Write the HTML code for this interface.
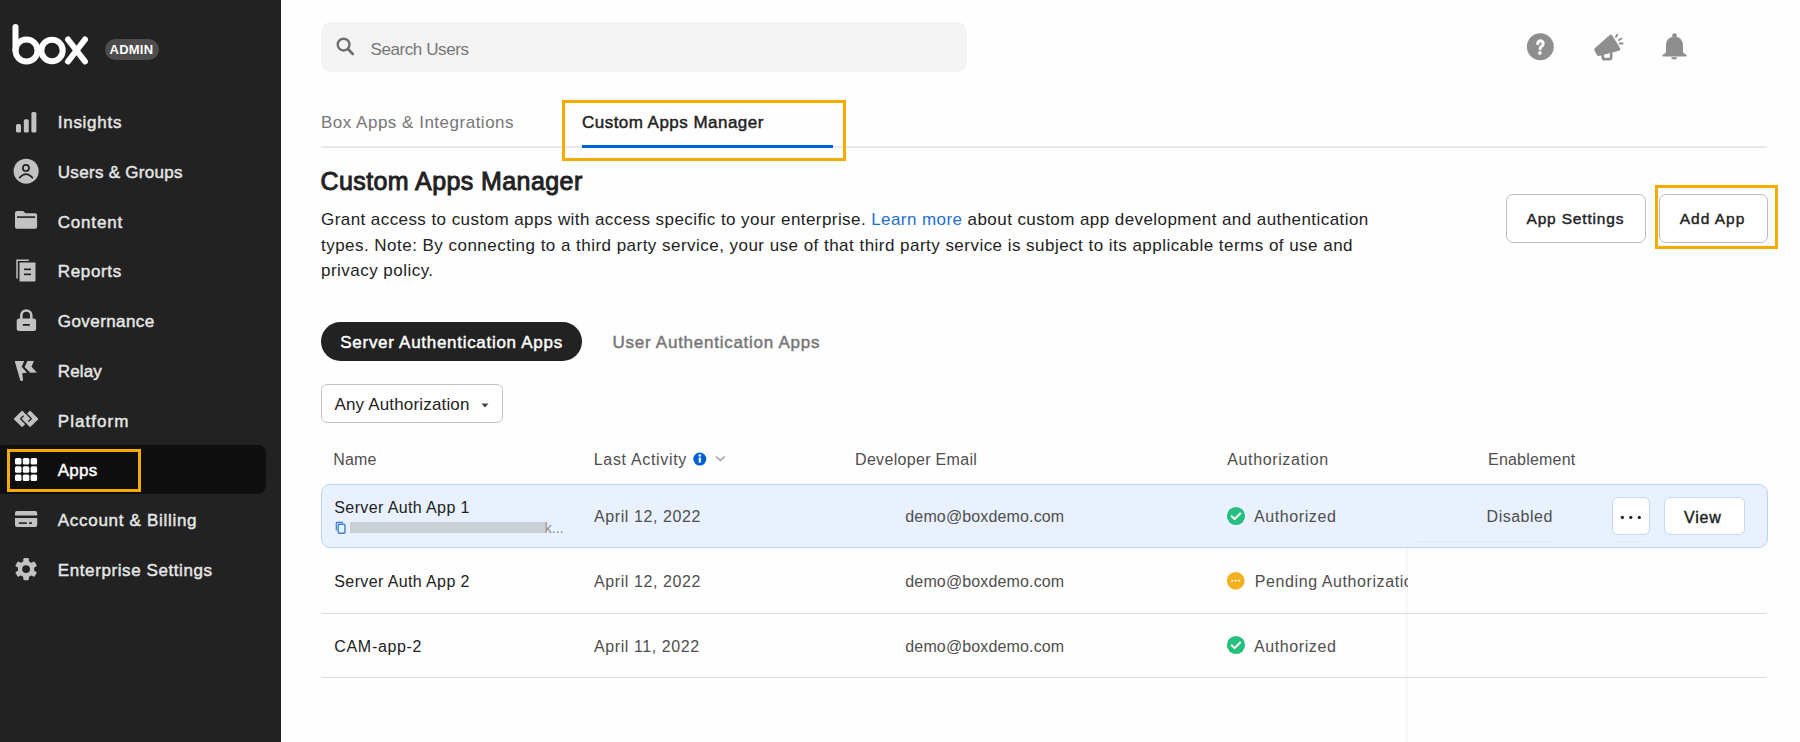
<!DOCTYPE html>
<html><head><meta charset="utf-8"><title>Custom Apps Manager</title>
<style>
html,body{margin:0;padding:0;width:1800px;height:742px;overflow:hidden;background:#fefefe;}
body{position:relative;font-family:"Liberation Sans", sans-serif;}
.t{position:absolute;white-space:nowrap;}
</style></head><body>
<div style="position:absolute;left:0;top:0;width:281px;height:742px;background:#212221"></div>
<svg style="position:absolute;left:0;top:0" width="100" height="80" viewBox="0 0 100 80">
<g fill="none" stroke="#fff" stroke-width="6" stroke-linecap="round">
<line x1="15.5" y1="27" x2="15.5" y2="50"/>
<circle cx="26.5" cy="50.5" r="11"/>
<circle cx="52" cy="50.5" r="10.7"/>
<line x1="68" y1="39.5" x2="85" y2="61.5"/>
<line x1="85" y1="39.5" x2="68" y2="61.5"/>
</g></svg>
<div style="position:absolute;left:104.5px;top:39px;width:54.5px;height:21px;border-radius:10.5px;background:#4d4d4d"></div>
<div class="t" style="left:109.50px;top:41.70px;font-size:13px;line-height:16px;font-weight:700;color:#fff;letter-spacing:0.250px;">ADMIN</div>
<div style="position:absolute;left:-4px;top:445px;width:270px;height:49px;background:#0f0f0f;border-radius:8px"></div>
<div style="position:absolute;left:7px;top:449px;width:128px;height:37px;border:3px solid #f5ab00"></div>
<div class="t" style="left:57.80px;top:112.21px;font-size:17px;line-height:21px;font-weight:400;color:#e6e6e6;letter-spacing:0.715px;-webkit-text-stroke:0.45px #e6e6e6;">Insights</div>
<div class="t" style="left:57.80px;top:161.94px;font-size:17px;line-height:21px;font-weight:400;color:#e6e6e6;letter-spacing:0.297px;-webkit-text-stroke:0.45px #e6e6e6;">Users &amp; Groups</div>
<div class="t" style="left:57.80px;top:211.67px;font-size:17px;line-height:21px;font-weight:400;color:#e6e6e6;letter-spacing:0.797px;-webkit-text-stroke:0.45px #e6e6e6;">Content</div>
<div class="t" style="left:57.80px;top:261.40px;font-size:17px;line-height:21px;font-weight:400;color:#e6e6e6;letter-spacing:0.637px;-webkit-text-stroke:0.45px #e6e6e6;">Reports</div>
<div class="t" style="left:57.80px;top:311.13px;font-size:17px;line-height:21px;font-weight:400;color:#e6e6e6;letter-spacing:0.427px;-webkit-text-stroke:0.45px #e6e6e6;">Governance</div>
<div class="t" style="left:57.80px;top:360.86px;font-size:17px;line-height:21px;font-weight:400;color:#e6e6e6;letter-spacing:0.145px;-webkit-text-stroke:0.45px #e6e6e6;">Relay</div>
<div class="t" style="left:57.80px;top:410.59px;font-size:17px;line-height:21px;font-weight:400;color:#e6e6e6;letter-spacing:1.034px;-webkit-text-stroke:0.45px #e6e6e6;">Platform</div>
<div class="t" style="left:57.80px;top:460.32px;font-size:17px;line-height:21px;font-weight:400;color:#fff;letter-spacing:0.200px;-webkit-text-stroke:0.45px #fff;">Apps</div>
<div class="t" style="left:57.80px;top:510.05px;font-size:17px;line-height:21px;font-weight:400;color:#e6e6e6;letter-spacing:0.697px;-webkit-text-stroke:0.45px #e6e6e6;">Account &amp; Billing</div>
<div class="t" style="left:57.80px;top:559.78px;font-size:17px;line-height:21px;font-weight:400;color:#e6e6e6;letter-spacing:0.591px;-webkit-text-stroke:0.45px #e6e6e6;">Enterprise Settings</div>

<svg style="position:absolute;left:0;top:0" width="281" height="742" viewBox="0 0 281 742">
<g fill="#c2c2c2">
 <!-- insights -->
 <rect x="16" y="124" width="5" height="8.5" rx="1.5"/>
 <rect x="23.8" y="119.3" width="5" height="13.2" rx="1.5"/>
 <rect x="31.4" y="112" width="5" height="20.5" rx="1.5"/>
 <!-- users -->
 <circle cx="26.15" cy="171.2" r="12.5"/>
 <!-- folder -->
 <path d="M15 213 a2 2 0 0 1 2-2 h6 l2.5 2.2 h9.6 a2 2 0 0 1 2 2 v11.5 a2 2 0 0 1-2 2 h-18.1 a2 2 0 0 1-2-2z"/>
 <!-- reports -->
 <path d="M16.3 259.4 h12.5 v1.5 h-11 v17.5 h-1.5z"/>
 <rect x="19.5" y="262.5" width="16" height="19" rx="0.8"/>
 <!-- lock -->
 <path d="M20 319 v-3.5 a6.3 6.3 0 0 1 12.6 0 v3.5 h-2.6 v-3.5 a3.7 3.7 0 0 0 -7.4 0 v3.5z"/>
 <rect x="16.7" y="318.5" width="19.4" height="12.5" rx="2.5"/>
 <!-- relay flag -->
 <path d="M15.1 361.1 L24.2 361.1 L21.7 366.7 L27 372.8 L22.2 373.2 L23 379.4 A1.45 1.45 0 0 1 20.1 379.8 L15 362.3Z"/>
 <path d="M27.4 361.1 L33.9 361.1 L31.5 366.7 L36.9 372.4 L30.2 372.8 L24.6 367.1Z"/>
 <!-- apps grid -->
 <rect x="15" y="458" width="6.5" height="6.5" rx="1.5" fill="#fff"/>
 <rect x="22.8" y="458" width="6.5" height="6.5" rx="1.5" fill="#fff"/>
 <rect x="30.6" y="458" width="6.5" height="6.5" rx="1.5" fill="#fff"/>
 <rect x="15" y="466.2" width="6.5" height="6.5" rx="1.5" fill="#fff"/>
 <rect x="22.8" y="466.2" width="6.5" height="6.5" rx="1.5" fill="#fff"/>
 <rect x="30.6" y="466.2" width="6.5" height="6.5" rx="1.5" fill="#fff"/>
 <rect x="15" y="474.4" width="6.5" height="6.5" rx="1.5" fill="#fff"/>
 <rect x="22.8" y="474.4" width="6.5" height="6.5" rx="1.5" fill="#fff"/>
 <rect x="30.6" y="474.4" width="6.5" height="6.5" rx="1.5" fill="#fff"/>
 <!-- card -->
 <path d="M15 513 a2 2 0 0 1 2-2 h18.2 a2 2 0 0 1 2 2 v2.5 h-22.2z"/>
 <path d="M15 518 h22.2 v7 a2 2 0 0 1-2 2 h-18.2 a2 2 0 0 1-2-2z"/>
</g>
<!-- users inner -->
<g fill="none" stroke="#222" stroke-width="1.7" stroke-linecap="round">
 <circle cx="25.95" cy="167.9" r="3.1"/>
 <path d="M19.6 177.6 Q26 170.5 32.4 177.6"/>
</g>
<!-- folder line -->
<rect x="17" y="216.3" width="18.1" height="1.6" fill="#222"/>
<!-- reports lines -->
<rect x="24" y="268.5" width="7" height="1.7" fill="#222"/>
<rect x="24" y="273.5" width="7" height="1.7" fill="#222"/>
<!-- lock dash -->
<rect x="22.8" y="324" width="7" height="1.8" fill="#222"/>
<!-- platform -->
<g fill="#c2c2c2" stroke="#c2c2c2" stroke-width="1.2" stroke-linejoin="round">
 <path d="M14.5 419 L22.1 411.3 L29.7 418.9 L22.1 426.4Z"/>
 <path d="M22.5 418.9 L30.1 411.3 L37.6 419 L30.1 426.4Z"/>
</g>
<g fill="none" stroke="#222" stroke-width="1.35" stroke-linecap="round" stroke-linejoin="round">
 <path d="M23.2 416.1 L20.6 418.7 L26.3 424.4"/>
 <path d="M25.7 412.9 L31.3 418.7 L28.7 421.3"/>
</g>
<!-- card dashes -->
<rect x="18.8" y="522.3" width="8" height="1.6" fill="#222"/>
<rect x="29" y="522.3" width="3" height="1.6" fill="#222"/>
<!-- gear -->
<g transform="translate(26.1 569.1)">
 <g fill="#c2c2c2">
  <circle r="8.2"/>
  <rect x="-2.8" y="-11.1" width="5.6" height="22.2" rx="1.2"/>
  <rect x="-2.8" y="-11.1" width="5.6" height="22.2" rx="1.2" transform="rotate(60)"/>
  <rect x="-2.8" y="-11.1" width="5.6" height="22.2" rx="1.2" transform="rotate(120)"/>
 </g>
 <circle r="3.9" fill="#222"/>
</g>
</svg>
<div style="position:absolute;left:321px;top:22px;width:646px;height:50px;background:#f3f3f3;border-radius:10px"></div>
<svg style="position:absolute;left:330px;top:30px" width="30" height="30" viewBox="330 30 30 30">
<circle cx="343.6" cy="44.6" r="5.9" fill="none" stroke="#6d6d6d" stroke-width="2.4"/>
<line x1="348" y1="49" x2="352.8" y2="54" stroke="#6d6d6d" stroke-width="2.6" stroke-linecap="round"/>
</svg>
<div class="t" style="left:370.50px;top:38.71px;font-size:17px;line-height:21px;font-weight:400;color:#767676;letter-spacing:-0.409px;">Search Users</div>
<svg style="position:absolute;left:1500px;top:20px" width="200" height="50" viewBox="1500 20 200 50">
<circle cx="1540.3" cy="46.75" r="13.45" fill="#8e8e8e"/>
<path d="M1537.7 43.6 a2.75 2.75 0 1 1 4.6 2.1 c-1.2 0.8 -2.1 1.4 -2.1 2.9" fill="none" stroke="#fff" stroke-width="3.1" stroke-linecap="round"/>
<circle cx="1539.9" cy="52.8" r="1.9" fill="#fff"/>
<path d="M1596 49.5 L1610.7 36.5 L1618.5 49 L1598.5 54.2Z" fill="#8e8e8e" stroke="#8e8e8e" stroke-width="3.6" stroke-linejoin="round"/>
<path d="M1602.6 54 L1602.8 57.5 Q1603 59.2 1604.8 59.2 L1609.3 59.2 Q1611.2 59.2 1611.2 57.3 L1611.2 52.5" fill="none" stroke="#8e8e8e" stroke-width="2.7"/>
<g stroke="#8e8e8e" stroke-width="1.8" stroke-linecap="round">
 <line x1="1615.9" y1="37" x2="1617.4" y2="34.6"/>
 <line x1="1618.9" y1="40" x2="1621.5" y2="38.4"/>
 <line x1="1619.8" y1="43.5" x2="1622.6" y2="43.5"/>
</g>
<g fill="#8e8e8e">
 <circle cx="1674.5" cy="35.6" r="2.4"/>
 <path d="M1674.5 36.8 c-5.2 0 -8.5 3.2 -8.5 8.5 v6.2 c0 1 -0.5 1.6 -1.5 2.2 l-1.8 1.1 c-0.6 0.4 -0.4 1.6 0.3 1.6 h23 c0.7 0 0.9-1.2 0.3-1.6 l-1.8-1.1 c-1 -0.6 -1.5-1.2 -1.5-2.2 v-6.2 c0-5.3 -3.3-8.5 -8.5-8.5z"/>
 <path d="M1671.2 57.3 h6 a3 2.1 0 0 1 -6 0z"/>
</g>
</svg>
<div class="t" style="left:321.00px;top:111.81px;font-size:17px;line-height:21px;font-weight:400;color:#767676;letter-spacing:0.505px;">Box Apps &amp; Integrations</div>
<div style="position:absolute;left:321px;top:146px;width:1446px;height:2px;background:#e8e8e8"></div>
<div class="t" style="left:582.00px;top:111.51px;font-size:17px;line-height:21px;font-weight:400;color:#222;letter-spacing:0.466px;-webkit-text-stroke:0.45px #222;">Custom Apps Manager</div>
<div style="position:absolute;left:582px;top:145px;width:251px;height:3px;background:#0061d5"></div>
<div style="position:absolute;left:562px;top:100px;width:278px;height:55px;border:3px solid #f5ab00"></div>
<div class="t" style="left:320.50px;top:165.84px;font-size:25px;line-height:31px;font-weight:400;color:#222;letter-spacing:0.412px;-webkit-text-stroke:0.95px #222;">Custom Apps Manager</div>
<div class="t" style="left:321.00px;top:209.31px;font-size:17px;line-height:21px;font-weight:400;color:#222;letter-spacing:0.429px;white-space:nowrap">Grant access to custom apps with access specific to your enterprise. <span style="color:#1f6fce">Learn more</span> about custom app development and authentication</div>
<div class="t" style="left:321.00px;top:234.61px;font-size:17px;line-height:21px;font-weight:400;color:#222;letter-spacing:0.470px;white-space:nowrap">types. Note: By connecting to a third party service, your use of that third party service is subject to its applicable terms of use and</div>
<div class="t" style="left:321.00px;top:259.81px;font-size:17px;line-height:21px;font-weight:400;color:#222;letter-spacing:0.470px;white-space:nowrap">privacy policy.</div>
<div style="position:absolute;left:1506px;top:193.5px;width:138px;height:47px;border:1px solid #bdbdbd;border-radius:7px;background:#fff"></div>
<div class="t" style="left:1526.50px;top:209.33px;font-size:15.5px;line-height:19px;font-weight:400;color:#222;letter-spacing:0.820px;-webkit-text-stroke:0.41px #222;">App Settings</div>
<div style="position:absolute;left:1659px;top:193.5px;width:106.5px;height:47px;border:1px solid #bdbdbd;border-radius:7px;background:#fff"></div>
<div class="t" style="left:1679.70px;top:209.33px;font-size:15.5px;line-height:19px;font-weight:400;color:#222;letter-spacing:1.000px;-webkit-text-stroke:0.41px #222;">Add App</div>
<div style="position:absolute;left:1655px;top:185px;width:116.5px;height:57.5px;border:3px solid #f5ab00"></div>
<div style="position:absolute;left:321px;top:321.8px;width:261px;height:39.5px;border-radius:20px;background:#222"></div>
<div class="t" style="left:340.30px;top:332.01px;font-size:17px;line-height:21px;font-weight:400;color:#fff;letter-spacing:0.708px;-webkit-text-stroke:0.45px #fff;">Server Authentication Apps</div>
<div class="t" style="left:612.50px;top:331.71px;font-size:17px;line-height:21px;font-weight:400;color:#767676;letter-spacing:0.739px;-webkit-text-stroke:0.45px #767676;">User Authentication Apps</div>
<div style="position:absolute;left:321px;top:384px;width:180px;height:37px;border:1px solid #c2c2c2;border-radius:6px;background:#fff"></div>
<div class="t" style="left:334.50px;top:394.21px;font-size:17px;line-height:21px;font-weight:400;color:#222;letter-spacing:0.162px;">Any Authorization</div>
<svg style="position:absolute;left:480px;top:402px" width="10" height="7" viewBox="0 0 10 7"><path d="M1.5 1.5 h7 l-3.5 4z" fill="#444"/></svg>
<div class="t" style="left:333.30px;top:449.96px;font-size:16px;line-height:20px;font-weight:400;color:#4e4e4e;letter-spacing:0.170px;">Name</div>
<div class="t" style="left:593.80px;top:449.96px;font-size:16px;line-height:20px;font-weight:400;color:#4e4e4e;letter-spacing:0.667px;">Last Activity</div>
<svg style="position:absolute;left:690px;top:450px" width="40" height="20" viewBox="690 450 40 20">
<circle cx="699.8" cy="459.1" r="6.5" fill="#0061d5"/>
<rect x="698.7" y="457.6" width="2.2" height="5" fill="#fff"/>
<circle cx="699.8" cy="455.5" r="1.25" fill="#fff"/>
<path d="M716 456.5 l4.3 4 l4.3 -4" fill="none" stroke="#9a9a9a" stroke-width="1.3"/>
</svg>
<div class="t" style="left:855.00px;top:449.96px;font-size:16px;line-height:20px;font-weight:400;color:#4e4e4e;letter-spacing:0.321px;">Developer Email</div>
<div class="t" style="left:1227.30px;top:449.96px;font-size:16px;line-height:20px;font-weight:400;color:#4e4e4e;letter-spacing:0.620px;">Authorization</div>
<div class="t" style="left:1488.00px;top:449.96px;font-size:16px;line-height:20px;font-weight:400;color:#4e4e4e;letter-spacing:0.207px;">Enablement</div>
<div style="position:absolute;left:321px;top:483.5px;width:1444.5px;height:62.5px;border:1px solid #bcd4f4;border-radius:9px;background:#e8f1fd"></div>
<div class="t" style="left:334.30px;top:497.66px;font-size:16px;line-height:20px;font-weight:400;color:#222;letter-spacing:0.383px;">Server Auth App 1</div>
<svg style="position:absolute;left:334px;top:520px" width="14" height="16" viewBox="334 520 14 16">
<path d="M336.3 530.5 v-7.3 a0.8 0.8 0 0 1 0.8-0.8 h5.8" fill="none" stroke="#3b7fd6" stroke-width="1.2"/>
<rect x="338.2" y="524.3" width="6.8" height="9" rx="1" fill="none" stroke="#3b7fd6" stroke-width="1.4"/>
</svg>
<div style="position:absolute;left:350px;top:522.2px;width:195px;height:11.3px;background:#cbd0d8"></div>
<div class="t" style="left:544.50px;top:518.98px;font-size:14.5px;line-height:18px;font-weight:400;color:#8a8a8a;letter-spacing:0.000px;">k...</div>
<div class="t" style="left:594.00px;top:507.36px;font-size:16px;line-height:20px;font-weight:400;color:#4e4e4e;letter-spacing:0.592px;">April 12, 2022</div>
<div class="t" style="left:905.30px;top:507.36px;font-size:16px;line-height:20px;font-weight:400;color:#4e4e4e;letter-spacing:0.143px;">demo@boxdemo.com</div>
<div class="t" style="left:1254.00px;top:507.36px;font-size:16px;line-height:20px;font-weight:400;color:#4e4e4e;letter-spacing:0.589px;">Authorized</div>
<div class="t" style="left:1486.60px;top:507.36px;font-size:16px;line-height:20px;font-weight:400;color:#4e4e4e;letter-spacing:0.500px;">Disabled</div>
<svg style="position:absolute;left:1225.6px;top:505.79999999999995px" width="20" height="20" viewBox="1225.6 505.79999999999995 20 20">
<circle cx="1235.6" cy="515.8" r="9.1" fill="#25c07d"/>
<path d="M1231.3 516.0 l2.9 2.9 l5.6 -5.6" fill="none" stroke="#fff" stroke-width="2" stroke-linecap="round" stroke-linejoin="round"/>
</svg>
<div style="position:absolute;left:1417px;top:541px;width:137px;height:1px;background:rgba(0,0,0,0.035)"></div>
<div style="position:absolute;left:1614px;top:541px;width:31px;height:1px;background:rgba(0,0,0,0.035)"></div>
<div style="position:absolute;left:1611.5px;top:496.5px;width:36.7px;height:36px;border:1px solid #c5d9f3;border-radius:6px;background:#fff"></div>
<svg style="position:absolute;left:1615px;top:510px" width="30" height="14" viewBox="1615 510 30 14">
<circle cx="1622.3" cy="517.4" r="1.6" fill="#222"/><circle cx="1630.8" cy="517.4" r="1.6" fill="#222"/><circle cx="1639.3" cy="517.4" r="1.6" fill="#222"/>
</svg>
<div style="position:absolute;left:1663.5px;top:496.5px;width:79px;height:36px;border:1px solid #c5d9f3;border-radius:6px;background:#fff"></div>
<div class="t" style="left:1684.00px;top:508.46px;font-size:16px;line-height:20px;font-weight:400;color:#222;letter-spacing:0.835px;-webkit-text-stroke:0.42px #222;">View</div>
<div class="t" style="left:334.30px;top:572.26px;font-size:16px;line-height:20px;font-weight:400;color:#222;letter-spacing:0.383px;">Server Auth App 2</div>
<div class="t" style="left:594.00px;top:572.26px;font-size:16px;line-height:20px;font-weight:400;color:#4e4e4e;letter-spacing:0.592px;">April 12, 2022</div>
<div class="t" style="left:905.30px;top:572.26px;font-size:16px;line-height:20px;font-weight:400;color:#4e4e4e;letter-spacing:0.143px;">demo@boxdemo.com</div>
<svg style="position:absolute;left:1225px;top:570px" width="22" height="22" viewBox="1225 570 22 22">
<circle cx="1235.7" cy="580.8" r="8.9" fill="#f5b01f"/>
<circle cx="1232.2" cy="580.8" r="1.05" fill="#fff"/><circle cx="1235.7" cy="580.8" r="1.05" fill="#fff"/><circle cx="1239.2" cy="580.8" r="1.05" fill="#fff"/>
</svg>
<div style="position:absolute;left:1250px;top:560px;width:158px;height:40px;overflow:hidden">
<div class="t" style="left:4.80px;top:12.26px;font-size:16px;line-height:20px;font-weight:400;color:#4e4e4e;letter-spacing:0.589px;white-space:nowrap">Pending Authorization</div>
</div>
<div style="position:absolute;left:321px;top:613px;width:1446px;height:1px;background:#dcdcdc"></div>
<div class="t" style="left:334.30px;top:636.76px;font-size:16px;line-height:20px;font-weight:400;color:#222;letter-spacing:0.675px;">CAM-app-2</div>
<div class="t" style="left:594.00px;top:636.76px;font-size:16px;line-height:20px;font-weight:400;color:#4e4e4e;letter-spacing:0.592px;">April 11, 2022</div>
<div class="t" style="left:905.30px;top:636.76px;font-size:16px;line-height:20px;font-weight:400;color:#4e4e4e;letter-spacing:0.143px;">demo@boxdemo.com</div>
<svg style="position:absolute;left:1225.6px;top:635.3px" width="20" height="20" viewBox="1225.6 635.3 20 20">
<circle cx="1235.6" cy="645.3" r="9.1" fill="#25c07d"/>
<path d="M1231.3 645.5 l2.9 2.9 l5.6 -5.6" fill="none" stroke="#fff" stroke-width="2" stroke-linecap="round" stroke-linejoin="round"/>
</svg>
<div class="t" style="left:1254.00px;top:636.76px;font-size:16px;line-height:20px;font-weight:400;color:#4e4e4e;letter-spacing:0.589px;">Authorized</div>
<div style="position:absolute;left:321px;top:677px;width:1446px;height:1px;background:#dcdcdc"></div>
<div style="position:absolute;left:1405px;top:548px;width:3px;height:194px;background:linear-gradient(to right, rgba(0,0,0,0), rgba(0,0,0,0.03))"></div>
</body></html>
